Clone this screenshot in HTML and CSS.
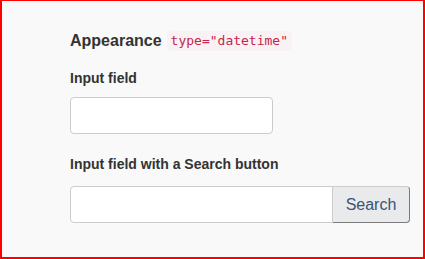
FILE: index.html
```html
<!DOCTYPE html>
<html lang="en">
<head>
  <meta charset="UTF-8">
  <meta name="viewport" content="width=device-width, initial-scale=1.0">
  <title>Appearance - datetime</title>
  <link rel="stylesheet" href="styles.css">
</head>
<body>
  <div class="frame">
    <h2 class="title">Appearance <code>type="datetime"</code></h2>

    <label class="field-label" for="plain">Input field</label>
    <input class="field" id="plain" type="text">

    <label class="field-label field-label-group" for="search">Input field with a Search button</label>
    <div class="input-group">
      <input class="field field-grow" id="search" type="text">
      <button class="btn" type="button">Search</button>
    </div>
  </div>
</body>
</html>
```

FILE: styles.css
```css
* {
  box-sizing: border-box;
  margin: 0;
  padding: 0;
}

body {
  font-family: "Liberation Sans", Arial, sans-serif;
  color: #333;
  background: #f9f9f9;
}

.frame {
  height: 259px;
  border: 2px solid #ff0000;
  border-top-width: 1px;
  background: #f9f9f9;
  padding: 30px 0 0 68px;
}

.title {
  display: flex;
  align-items: center;
  gap: 5px;
  font-size: 16px;
  font-weight: 700;
  line-height: 20px;
  height: 20px;
}

.title code {
  font-family: "DejaVu Sans Mono", "Liberation Mono", monospace;
  font-weight: 400;
  font-size: 13px;
  line-height: 20px;
  color: #c7254e;
  background: #f9f2f4;
  border-radius: 4px;
  padding: 0 4px;
}

.field-label {
  display: block;
  font-size: 14px;
  font-weight: 700;
  line-height: 20px;
  margin-top: 17px;
  margin-bottom: 9px;
}

.field-label-group {
  margin-top: 20px;
  margin-bottom: 12px;
}

.field {
  display: block;
  width: 203px;
  height: 37px;
  background: #fff;
  border: 1px solid #ccc;
  border-radius: 4px;
  font-size: 14px;
  padding: 6px 12px;
  outline: none;
}

.input-group {
  display: flex;
  width: 340px;
}

.field-grow {
  flex: 1;
  width: auto;
  border-radius: 4px 0 0 4px;
}

.btn {
  width: 77px;
  height: 37px;
  font-family: "Liberation Sans", Arial, sans-serif;
  font-size: 16px;
  color: #3b5376;
  background: #e9eaec;
  border: 1px solid #ccc;
  border-left: none;
  border-right-color: #7a7a7a;
  border-bottom-color: #7a7a7a;
  border-radius: 0 4px 4px 0;
}
```
